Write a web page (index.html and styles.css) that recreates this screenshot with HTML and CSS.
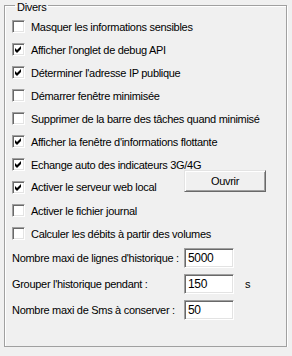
FILE: index.html
```html
<!DOCTYPE html>
<html lang="fr">
<head>
    <meta charset="UTF-8">
    <title>Options</title>
    <link rel="stylesheet" href="styles.css">
</head>
<body>
    <fieldset class="group">
        <legend class="group-title">Divers</legend>

        <div class="row"><span class="box"></span><span class="lbl">Masquer les informations sensibles</span></div>
        <div class="row"><span class="box"><svg viewBox="0 0 9 9" width="9" height="9"><path d="M1 3 L3 5 L7 1 L7 4 L3 8 L1 6 Z"/></svg></span><span class="lbl">Afficher l'onglet de debug API</span></div>
        <div class="row"><span class="box"><svg viewBox="0 0 9 9" width="9" height="9"><path d="M1 3 L3 5 L7 1 L7 4 L3 8 L1 6 Z"/></svg></span><span class="lbl">Déterminer l'adresse IP publique</span></div>
        <div class="row"><span class="box"></span><span class="lbl">Démarrer fenêtre minimisée</span></div>
        <div class="row"><span class="box"></span><span class="lbl">Supprimer de la barre des tâches quand minimisé</span></div>
        <div class="row"><span class="box"><svg viewBox="0 0 9 9" width="9" height="9"><path d="M1 3 L3 5 L7 1 L7 4 L3 8 L1 6 Z"/></svg></span><span class="lbl">Afficher la fenêtre d'informations flottante</span></div>
        <div class="row"><span class="box"><svg viewBox="0 0 9 9" width="9" height="9"><path d="M1 3 L3 5 L7 1 L7 4 L3 8 L1 6 Z"/></svg></span><span class="lbl">Echange auto des indicateurs 3G/4G</span></div>
        <div class="row row-btn">
            <span class="box"><svg viewBox="0 0 9 9" width="9" height="9"><path d="M1 3 L3 5 L7 1 L7 4 L3 8 L1 6 Z"/></svg></span><span class="lbl">Activer le serveur web local</span>
            <button class="btn">Ouvrir</button>
        </div>
        <div class="row"><span class="box"></span><span class="lbl">Activer le fichier journal</span></div>
        <div class="row"><span class="box"></span><span class="lbl">Calculer les débits à partir des volumes</span></div>

        <div class="field"><span class="field-lbl">Nombre maxi de lignes d'historique :</span><span class="txt">5000</span></div>
        <div class="field"><span class="field-lbl">Grouper l'historique pendant :</span><span class="txt">150</span><span class="unit">s</span></div>
        <div class="field"><span class="field-lbl">Nombre maxi de Sms à conserver :</span><span class="txt">50</span></div>
    </fieldset>
</body>
</html>
```

FILE: styles.css
```css
body{
    margin: 0;
    background-color: #f0f0f0;
    font-family: "Liberation Sans", Arial, sans-serif;
    font-size: 11px;
    letter-spacing: -0.3px;
    color: #000;
}

.group{
    margin: 0 0 0 4px;
    width: 283px;
    height: 347px;
    min-width: 0;
    box-sizing: border-box;
    padding: 4px 20px 0 7px;
    border: 1px solid #a0a0a0;
    box-shadow: inset 1px 1px 0 #fff, 1px 1px 0 #fff;
}
.group-title{
    position: relative;
    top: 2px;
    margin-left: 3px;
    padding: 0 2px;
    line-height: 11px;
}

.row{
    display: flex;
    align-items: center;
    height: 23px;
}
.row-btn{
    align-items: flex-start;
}
.row-btn .box,.row-btn .lbl{
    margin-top: 5px;
}
.row-btn .lbl{
    line-height: 13px;
}

.box{
    width: 13px;
    height: 13px;
    box-sizing: border-box;
    flex-shrink: 0;
    background-color: #fff;
    border-top: 1px solid #a0a0a0;
    border-left: 1px solid #a0a0a0;
    border-bottom: 1px solid #fff;
    border-right: 1px solid #fff;
    box-shadow: inset 1px 1px 0 #696969, inset -1px -1px 0 #e3e3e3;
    padding: 1px;
}
.box svg{
    display: block;
    fill: #000;
}
.lbl{
    margin-left: 6px;
    white-space: nowrap;
}

.btn{
    flex-shrink: 0;
    margin-left: auto;
    margin-top: -6px;
    width: 82px;
    height: 22px;
    padding: 0;
    font-family: inherit;
    font-size: 11px;
    letter-spacing: -0.3px;
    color: #000;
    background-color: #f0f0f0;
    border-top: 1px solid #e3e3e3;
    border-left: 1px solid #e3e3e3;
    border-bottom: 1px solid #696969;
    border-right: 1px solid #696969;
    box-shadow: inset 1px 1px 0 #fff, inset -1px -1px 0 #a0a0a0;
}

.field{
    display: flex;
    align-items: center;
    height: 26px;
}
.field-lbl{
    width: 172px;
    flex-shrink: 0;
    white-space: nowrap;
}
.txt{
    width: 50px;
    height: 20px;
    flex-shrink: 0;
    box-sizing: border-box;
    padding: 2px 0 0 3px;
    background-color: #fff;
    border-top: 1px solid #a0a0a0;
    border-left: 1px solid #a0a0a0;
    border-bottom: 1px solid #fff;
    border-right: 1px solid #fff;
    box-shadow: inset 1px 1px 0 #696969, inset -1px -1px 0 #e3e3e3;
    font-size: 12px;
    line-height: 14px;
}
.unit{
    margin-left: 11px;
}
```
